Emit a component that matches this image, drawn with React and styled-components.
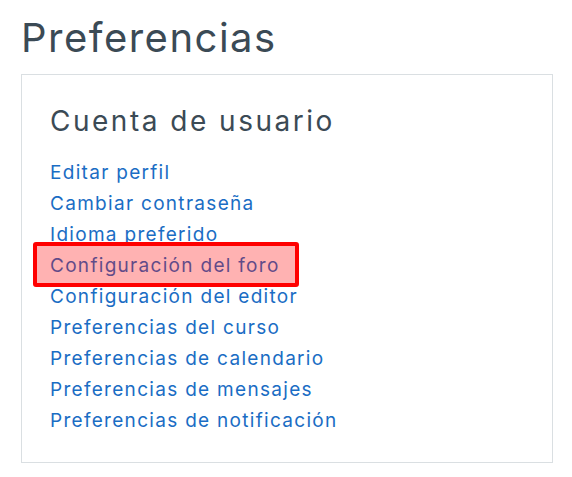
import React from "react";
import styled, { createGlobalStyle } from "styled-components";

const Global = createGlobalStyle`
  html, body { margin: 0; padding: 0; background: #ffffff; }
  body { font-family: Inter, "Noto Sans", sans-serif; }
`;

const Page = styled.div`
  padding: 14px 20px 14px 21px;
  width: 532px;
`;

const Title = styled.h1`
  margin: 0 0 12px 0;
  font-size: 40px;
  line-height: 48px;
  font-weight: 400;
  color: #3b4a55;
  letter-spacing: 1.5px;
`;

const Card = styled.section`
  border: 1px solid #dadfe2;
  padding: 28px 28px 26px 28px;
`;

const CardTitle = styled.h2`
  margin: 0 0 18px 0;
  font-size: 28px;
  line-height: 36px;
  font-weight: 400;
  color: #3b4a55;
  letter-spacing: 2.5px;
`;

const List = styled.ul`
  list-style: none;
  margin: 0;
  padding: 0;
`;

const Item = styled.li`
  position: relative;
  font-size: 19px;
  line-height: 31px;
`;

const Link = styled.a`
  color: #1a6dc4;
  text-decoration: none;
  letter-spacing: 1.3px;
`;

const Highlight = styled.span`
  position: absolute;
  left: -17px;
  top: -8px;
  height: 37px;
  width: ${(p) => p.$w}px;
  border: 4px solid #ff0000;
  border-radius: 3px;
  background: rgba(255, 0, 0, 0.3);
  pointer-events: none;
`;

const links = [
  "Editar perfil",
  "Cambiar contraseña",
  "Idioma preferido",
  "Configuración del foro",
  "Configuración del editor",
  "Preferencias del curso",
  "Preferencias de calendario",
  "Preferencias de mensajes",
  "Preferencias de notificación",
];

export default function App() {
  return (
    <>
      <Global />
      <Page>
        <Title>Preferencias</Title>
        <Card>
          <CardTitle>Cuenta de usuario</CardTitle>
          <List>
            {links.map((l, i) => (
              <Item key={l}>
                <Link href="#">{l}</Link>
                {i === 3 && <Highlight $w={258} />}
              </Item>
            ))}
          </List>
        </Card>
      </Page>
    </>
  );
}
